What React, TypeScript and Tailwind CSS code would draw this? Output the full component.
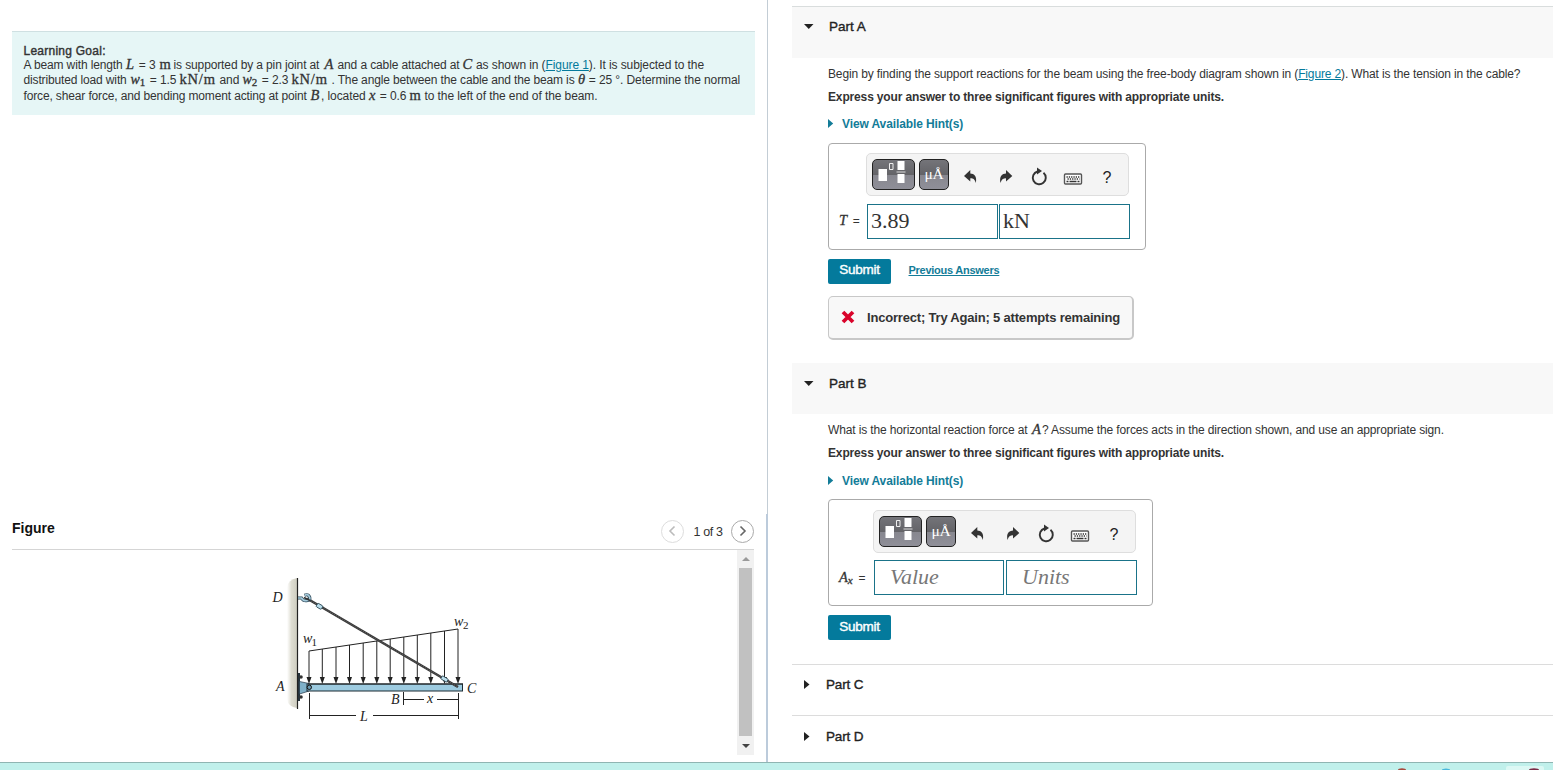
import React from "react";

const SERIF = "font-['Liberation_Serif',serif]";

function Line({ children, className = "" }: { children: React.ReactNode; className?: string }) {
  return <div className={"flex items-baseline whitespace-pre " + className}>{children}</div>;
}

function Seg({ w, children, className = "" }: { w: number; children: React.ReactNode; className?: string }) {
  return (
    <span className={"shrink-0 whitespace-pre " + className} style={{ width: w }}>
      {children}
    </span>
  );
}

const MI = SERIF + " italic text-[14.5px] leading-none tracking-normal [-webkit-text-stroke:0.3px_#333]";
const MW = SERIF + " italic text-[14px] leading-none tracking-normal [-webkit-text-stroke:0.3px_#333]";
const MR = SERIF + " text-[14.5px] leading-none tracking-[0.8px] [-webkit-text-stroke:0.3px_#333]";
const SUB = "relative top-[2px] text-[11px] leading-none";
const LINK = "text-[#047a9c] underline";

function LearningGoal() {
  return (
    <section className="ml-3 mt-[31px] h-[84px] w-[743px] border-t border-[#cfe0e2] bg-[#e6f6f6] pl-[11.5px] pt-[12px] text-[12px] tracking-[-0.09px] text-[#333]">
      <div className="h-[12px] leading-[14px] tracking-[0.25px] [-webkit-text-stroke:0.4px_#333]">Learning Goal:</div>
      <Line className="mt-[1px] h-[15px] leading-[15px]">
        <Seg w={102.5} className="tracking-[-0.13px]">A beam with length </Seg>
        <Seg w={9.5} className={MI}>L</Seg>
        <Seg w={24}> = 3 </Seg>
        <Seg w={14} className={MR}>m</Seg>
        <Seg w={151} className="tracking-[-0.12px]">is supported by a pin joint at </Seg>
        <Seg w={13} className={MI}>A</Seg>
        <Seg w={125} className="tracking-[-0.12px]">and a cable attached at </Seg>
        <Seg w={13.5} className={MI}>C</Seg>
        <span>as shown in (<a className={LINK}>Figure 1</a>). It is subjected to the</span>
      </Line>
      <Line className="h-[16px] leading-[16px]">
        <Seg w={107} className="tracking-[-0.14px]">distributed load with </Seg>
        <Seg w={16} className={MW}>w<span className={SUB + " not-italic"}>1</span></Seg>
        <Seg w={33}> = 1.5 </Seg>
        <Seg w={40} className={MR}>kN/m</Seg>
        <Seg w={23}>and </Seg>
        <Seg w={16} className={MW}>w<span className={SUB + " not-italic"}>2</span></Seg>
        <Seg w={33}> = 2.3 </Seg>
        <Seg w={40} className={MR}>kN/m</Seg>
        <Seg w={246.5} className="tracking-[-0.14px]">. The angle between the cable and the beam is </Seg>
        <Seg w={7.5} className={MI}>θ</Seg>
        <span> = 25 °. Determine the normal</span>
      </Line>
      <Line className="h-[16px] leading-[16px]">
        <Seg w={287} className="tracking-[-0.14px]">force, shear force, and bending moment acting at point </Seg>
        <Seg w={10.5} className={MI}>B</Seg>
        <Seg w={48}>, located </Seg>
        <Seg w={7.5} className={MI}>x</Seg>
        <Seg w={33}> = 0.6 </Seg>
        <Seg w={15} className={MR}>m</Seg>
        <span>to the left of the end of the beam.</span>
      </Line>
    </section>
  );
}

const ARROWS = [49, 62.3, 76, 89.5, 103.2, 116.8, 130.2, 143.8, 157.3, 170.8, 184.5, 198];

function BeamFigure() {
  return (
    <svg width="230" height="165" viewBox="0 0 230 165" className="shrink-0">
      <defs>
        <linearGradient id="wall" x1="0" x2="1">
          <stop offset="0" stopColor="#fff" />
          <stop offset="0.45" stopColor="#deddd2" />
          <stop offset="1" stopColor="#cfcec1" />
        </linearGradient>
      </defs>
      <path d="M37 13 Q28 15 27 22 V134 Q28 142 37 143Z" fill="url(#wall)" />
      <path d="M37.500 13V144" stroke="#222" strokeWidth="1.200" />
      <path d="M49 86 198 64" stroke="#222" strokeWidth="1" />
      {ARROWS.map((x) => (
        <g key={x}>
          <path d={`M${x} ${86 - ((x - 49) * 22) / 149}V116`} stroke="#222" strokeWidth="1" />
          <path d={`M${x - 2.5} 112H${x + 2.5}L${x} 119Z`} fill="#222" />
        </g>
      ))}
      <path d="M38 108h2v28h-2z" fill="#26333c" />
      <circle cx="41" cy="112" r="1.800" fill="#333" />
      <circle cx="41" cy="132" r="1.800" fill="#333" />
      <path d="M39.500 116.500 49 118.500V126L39.500 129Z" fill="#7fb0c8" stroke="#234" strokeWidth=".7" />
      <rect x="47" y="119" width="155.500" height="7" fill="#9dcbe0" stroke="#1b2a33" strokeWidth="1" />
      <path d="M48 119H203" stroke="#222" strokeWidth="1.200" />
      <circle cx="49.300" cy="122.300" r="2.200" fill="#6b97ad" stroke="#111" strokeWidth="1" />
      <path d="M47 33.500 198 122" stroke="#383838" strokeWidth="2.600" />
      <path d="M47 33.500 198 122" stroke="#777" strokeWidth=".7" strokeDasharray="1.200 1.200" />
      <path d="M38 33H41.500Q43.500 36.500 47.500 35.500T49 31Q48 29 44.500 30.200" fill="none" stroke="#2b4657" strokeWidth="3.200" />
      <path d="M38 33H41.500Q43.500 36.500 47.500 35.500T49 31Q48 29 44.800 30.100" fill="none" stroke="#a5cbdc" strokeWidth="1.700" />
      <path d="M44 32.500 50 35.500" stroke="#333" strokeWidth="1.600" />
      <rect x="-3" y="-2" width="6" height="4" rx="1" transform="translate(59.500 41.300) rotate(30)" fill="#b9dcea" stroke="#26424f" strokeWidth=".8" />
      <rect x="-3.500" y="-1.800" width="7" height="3.600" rx="1" transform="translate(184.500 114) rotate(30)" fill="#b9dcea" stroke="#26424f" strokeWidth=".8" />
      <path d="M49.500 128V154M198.500 128V154M49 150.500H96M113 150.500H198M143.500 127V140M144 134.500H164M177 134.500H198" stroke="#222" strokeWidth="1" fill="none" />
      <g className="font-['Liberation_Serif',serif] italic" fontSize="14" fill="#222">
        <text x="12.500" y="37">D</text>
        <text x="16" y="126">A</text>
        <text x="207" y="128">C</text>
        <text x="131" y="139">B</text>
        <text x="167" y="138">x</text>
        <text x="100" y="156">L</text>
        <text x="43" y="78">w</text>
        <text x="51.500" y="81" fontSize="11" fontStyle="normal">1</text>
        <text x="194" y="61">w</text>
        <text x="203" y="64" fontSize="11" fontStyle="normal">2</text>
      </g>
    </svg>
  );
}

function FigurePanel() {
  return (
    <section className="mt-auto ml-3 flex h-[248px] w-[742px] flex-col">
      <header className="flex h-[36px] items-center border-b border-[#d5d5d5]">
        <h2 className="-mt-[7px] text-[14px] font-bold text-[#111]">Figure</h2>
        <button className="-mt-[1px] ml-auto flex size-[23px] items-center justify-center rounded-full border border-[#ddd]">
          <svg width="9" height="12" viewBox="0 0 9 12"><path d="M6.500 1.500 2 6l4.500 4.500" fill="none" stroke="#bbb" strokeWidth="1.600" /></svg>
        </button>
        <span className="mt-px w-[47px] pl-px text-center text-[12.500px] tracking-[-0.4px] text-[#333]">1 of 3</span>
        <button className="-mt-[1px] flex size-[23px] items-center justify-center rounded-full border border-[#aaa]">
          <svg width="9" height="12" viewBox="0 0 9 12"><path d="M2.500 1.500 7 6l-4.500 4.500" fill="none" stroke="#666" strokeWidth="1.600" /></svg>
        </button>
      </header>
      <div className="flex h-[205px] justify-between">
        <div className="pl-[248px] pt-[15px]"><BeamFigure /></div>
        <div className="flex h-[205px] w-[17px] flex-col items-center justify-between bg-[#f1f1f1] pt-[7px] pb-[7px]">
          <svg width="8" height="4" viewBox="0 0 8 4"><path d="M0 4 4 0 8 4Z" fill="#9a9a9a" /></svg>
          <div className="-mt-[3px] -mb-px h-[168px] w-[13px] bg-[#c1c1c1]" />
          <svg width="8" height="4" viewBox="0 0 8 4"><path d="M0 0H8L4 4Z" fill="#444" /></svg>
        </div>
      </div>
    </section>
  );
}

const TITLE = "text-[13.500px] leading-[18px] text-[#222] [-webkit-text-stroke:0.35px_#222]";

function PartHeader({ title, first = false }: { title: string; first?: boolean }) {
  return (
    <header className={"flex items-start bg-[#f8f8f8] pl-[12px] " + (first ? "h-[52px] border-t border-[#d9dddd] pt-[11px]" : "h-[51px] pt-[12px]")}>
      <svg width="10" height="5" viewBox="0 0 10 5" className="mt-[6px]"><path d="M0 0H9.500L4.750 5Z" fill="#222" /></svg>
      <h3 className={"ml-[15px] " + TITLE}>{title}</h3>
    </header>
  );
}

function CollapsedPart({ title, h, pt }: { title: string; h: string; pt: string }) {
  return (
    <div className={"flex items-start border-t border-[#dcdcdc] pl-[12px] " + h + " " + pt}>
      <svg width="6" height="9" viewBox="0 0 6 9" className="mt-[4px]"><path d="M0 0V9L5.500 4.500Z" fill="#222" /></svg>
      <h3 className={"ml-[16px] tracking-[-0.15px] " + TITLE}>{title}</h3>
    </div>
  );
}

function Hints() {
  return (
    <div className="flex h-[15px] items-center text-[12px] font-bold text-[#137c98]">
      <svg width="6" height="9" viewBox="0 0 6 9" className="-mt-[2px]"><path d="M0 0V9L5.200 4.500Z" fill="#137c98" /></svg>
      <span className="ml-[8px] leading-[15px] tracking-[-0.11px]">View Available Hint(s)</span>
    </div>
  );
}

const KEY = "shrink-0 rounded-[5px] border border-[#222] bg-[linear-gradient(#747479_0%,#646468_50%,#87878f_51%,#8f8f98_100%)]";

function Toolbar() {
  return (
    <div className="flex h-[43px] w-[263px] items-start rounded-[5px] border border-[#dedede] bg-[#f4f4f4] pl-[5px] pt-[5px]">
      <div className={KEY + " h-[31px] w-[43px]"}>
        <svg width="41" height="29" viewBox="0 0 41 29">
          <path d="M5.500 9h8.500v12H5.500zM24.500 1h7v9h-7zM24.500 14h7v9h-7z" fill="#fff" />
          <path d="M16.500 3.500h3.500v6h-3.500z" fill="none" stroke="#eee" />
          <path d="M23.500 12H32.500" stroke="#ddd" strokeWidth="1" />
        </svg>
      </div>
      <div className={KEY + " ml-[4px] flex h-[31px] w-[30px] justify-center text-[15.500px] leading-[27px] text-white " + SERIF}>
        <span>μÅ</span>
      </div>
      <svg width="130" height="29" viewBox="0 0 130 29" className="ml-[15px] mt-[5px] shrink-0" fill="none" stroke="#333">
        <path d="M0 12 6.300 6V9.400C10 9.600 13.300 12 11.800 19C10.800 15.500 9.500 14.200 6.300 14.200V17.500Z" fill="#333" stroke="none" />
        <path d="M48.300 12 42 6V9.400C38.300 9.600 35 12 36.500 19C37.500 15.500 39 14.200 42 14.200V17.500Z" fill="#333" stroke="none" />
        <path d="M79.500 8.800A6.500 6.500 0 1 1 73.500 7.500" strokeWidth="1.900" />
        <path d="M73 3.500 78 7 73 10.500Z" fill="#333" stroke="none" />
        <rect x="100.500" y="10" width="17" height="10" rx="1" strokeWidth="1.400" stroke="#555" fill="#fff" />
        <path d="M102.500 13H115.500M103.500 15H115.500" strokeDasharray="1.300 1" strokeWidth="1.300" />
        <path d="M102.500 17.500H104.500M105.500 17.500H112.500M113.500 17.500H115.500" strokeWidth="1.300" />
      </svg>
      <span className="ml-[8.500px] mt-[9px] text-[16px] leading-[20px] text-[#222]">?</span>
    </div>
  );
}

function Field({ children, className }: { children: React.ReactNode; className: string }) {
  return (
    <div className={"h-[35px] border border-[#1a7389] bg-white text-[22px] leading-[32px] " + SERIF + " " + className}>
      {children}
    </div>
  );
}

function Submit({ className }: { className: string }) {
  return (
    <button className={"h-[25px] w-[63px] rounded-[2px] bg-[#047a9c] text-[13.500px] leading-[21px] tracking-[-0.25px] text-white [-webkit-text-stroke:0.4px_#fff] " + className}>
      Submit
    </button>
  );
}

const EXPRESS = "Express your answer to three significant figures with appropriate units.";

function PartA() {
  return (
    <section className="flex h-[356px] flex-col">
      <PartHeader title="Part A" first />
      <div className="pl-[36px] text-[12px] tracking-[-0.135px] text-[#333]">
        <p className="mt-[9px] whitespace-nowrap leading-[15px]">
          Begin by finding the support reactions for the beam using the free-body diagram shown in (<a className={LINK}>Figure 2</a>). What is the tension in the cable?
        </p>
        <p className="mt-[8px] mb-[12px] font-bold leading-[15px] tracking-[-0.15px]">{EXPRESS}</p>
        <Hints />
        <div className="mt-[11px] h-[107px] w-[318px] rounded-[4px] border border-[#aaa] pt-[9px]">
          <div className="pl-[37px]"><Toolbar /></div>
          <div className="mt-[8px] flex items-center tracking-normal">
            <span className="-mt-[2px] w-[38px] pl-[10px] text-[12px]"><i className={MI}>T</i>{"\u2009 ="}</span>
            <Field className="w-[131px] pl-[3px] text-[#333]">3.89</Field>
            <Field className="ml-[1px] w-[131px] pl-[3px] text-[#333]">kN</Field>
          </div>
        </div>
        <div className="mt-[9px] flex">
          <Submit className="pb-[4px]" />
          <a className="ml-[17.5px] mt-[3px] text-[11px] font-bold leading-[16px] tracking-[-0.26px] text-[#137c98] underline">Previous Answers</a>
        </div>
        <div className="mt-[12px] flex h-[44px] w-[306px] items-center rounded-[5px] border border-r-2 border-b-2 border-[#c8c8c8] bg-[#f8f8f8] pl-[12px]">
          <svg width="14" height="14" viewBox="0 0 14 14" className="-mt-px"><path d="M2 2 12 12M12 2 2 12" stroke="#d9042b" strokeWidth="3.800" /></svg>
          <span className="ml-[12px] whitespace-nowrap text-[13px] font-bold tracking-[-0.19px]">Incorrect; Try Again; 5 attempts remaining</span>
        </div>
      </div>
    </section>
  );
}

function PartB() {
  return (
    <section className="flex h-[301px] flex-col">
      <PartHeader title="Part B" />
      <div className="pl-[36px] text-[12px] tracking-[-0.135px] text-[#333]">
        <Line className="mt-[8px] h-[15px] leading-[15px]">
          <Seg w={204}>What is the horizontal reaction force at </Seg>
          <Seg w={10} className={MI}>A</Seg>
          <span>? Assume the forces acts in the direction shown, and use an appropriate sign.</span>
        </Line>
        <p className="mt-[9px] mb-[13px] font-bold leading-[15px] tracking-[-0.15px]">{EXPRESS}</p>
        <Hints />
        <div className="mt-[10px] h-[107px] w-[325px] rounded-[4px] border border-[#aaa] pt-[10px]">
          <div className="pl-[44px]"><Toolbar /></div>
          <div className="mt-[7px] flex items-center tracking-normal">
            <span className="w-[45px] whitespace-nowrap pl-[10px] text-[12px] leading-[18px]"><i className={MI}>A<span className={SUB}>x</span></i>{"\u2009 ="}</span>
            <Field className="w-[130px] pl-[15px] italic text-[#777]">Value</Field>
            <Field className="ml-[2px] w-[131px] pl-[15px] italic text-[#777]">Units</Field>
          </div>
        </div>
        <div className="mt-[9px] flex"><Submit className="pb-[2px]" /></div>
      </div>
    </section>
  );
}

export default function App() {
  return (
    <div className="flex h-[770px] w-[1553px] flex-col overflow-hidden bg-white font-['Liberation_Sans',Arial,sans-serif]">
      <div className="flex h-[762px]">
        <main className="flex w-[766px] shrink-0 flex-col">
          <LearningGoal />
          <FigurePanel />
        </main>
        <div className="flex w-[2px] flex-col items-end">
          <div className="h-[514px] w-px bg-[#c3cdd5]" />
          <div className="h-[248px] w-[2px] bg-[#bccbdb]" />
        </div>
        <aside className="ml-[24px] flex grow flex-col pt-[6px]">
          <PartA />
          <div className="pt-px" />
          <PartB />
          <CollapsedPart title="Part C" h="h-[51px]" pt="pt-[11px]" />
          <CollapsedPart title="Part D" h="h-[47px]" pt="pt-[12px]" />
        </aside>
      </div>
      <footer className="flex h-[8px] items-end border-t border-[#8fb5b2] bg-[#c0f0eb] pl-[1396px]">
        <svg width="150" height="7" viewBox="0 0 150 7">
          <rect x="110" y="3" width="38" height="6" rx="2" fill="#dcf8f4" />
          <ellipse cx="6" cy="7" rx="4" ry="1.800" fill="#a84a3e" />
          <ellipse cx="50" cy="7" rx="4" ry="1.500" fill="#48b7dc" />
          <ellipse cx="138" cy="7" rx="5" ry="1.800" fill="#7a2a45" />
        </svg>
      </footer>
    </div>
  );
}
